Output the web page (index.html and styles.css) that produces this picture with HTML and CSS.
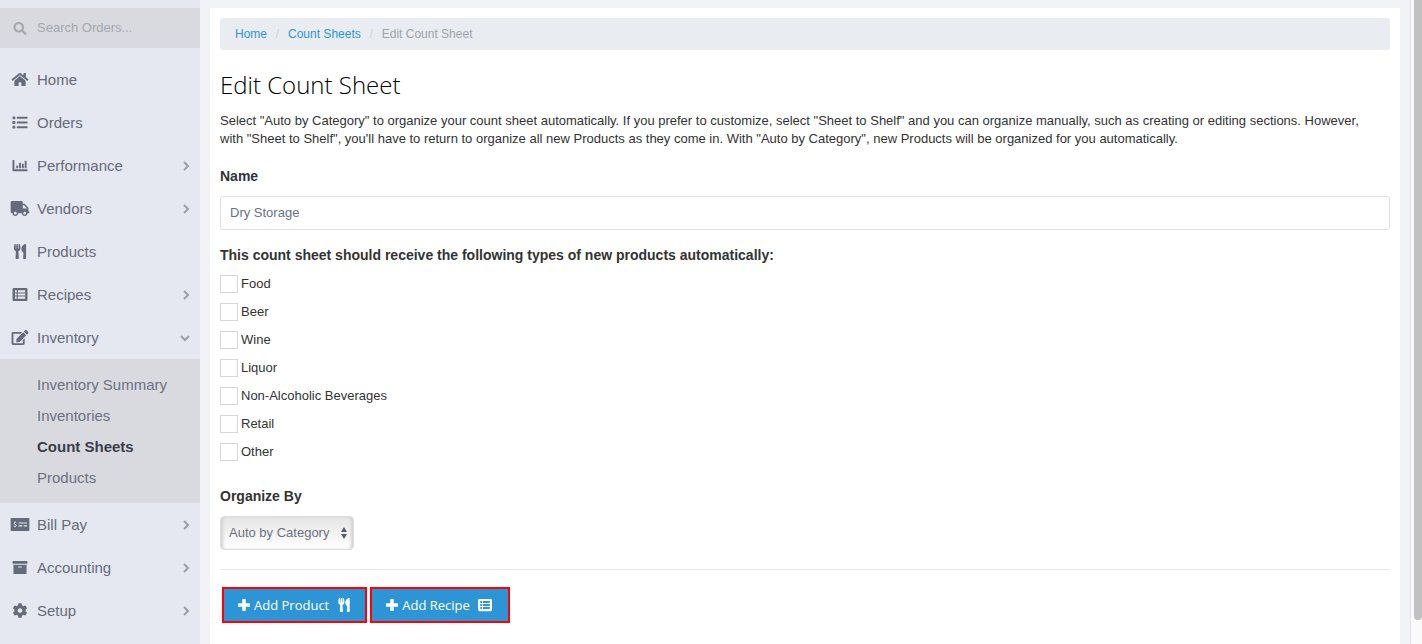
FILE: index.html
```html
<!DOCTYPE html>
<html lang="en">
<head>
<meta charset="utf-8">
<title>Edit Count Sheet</title>
<link rel="stylesheet" href="styles.css">
</head>
<body>
<svg class="sprite" aria-hidden="true">
  <symbol id="search" viewBox="0 0 512 512"><path d="M505 442.7L405.3 343c-4.5-4.5-10.6-7-17-7H372c27.6-35.3 44-79.7 44-128C416 93.1 322.9 0 208 0S0 93.1 0 208s93.1 208 208 208c48.3 0 92.7-16.4 128-44v16.3c0 6.4 2.5 12.5 7 17l99.7 99.7c9.4 9.4 24.6 9.4 33.9 0l28.3-28.3c9.4-9.4 9.4-24.6.1-34zM208 336c-70.7 0-128-57.2-128-128 0-70.7 57.2-128 128-128 70.7 0 128 57.2 128 128 0 70.7-57.2 128-128 128z"/></symbol>
  <symbol id="home" viewBox="0 0 576 512"><path d="M280.37 148.26L96 300.11V464a16 16 0 0 0 16 16l112.06-.29a16 16 0 0 0 15.92-16V368a16 16 0 0 1 16-16h64a16 16 0 0 1 16 16v95.64a16 16 0 0 0 16 16.05L464 480a16 16 0 0 0 16-16V300L295.67 148.26a12.19 12.19 0 0 0-15.3 0zM571.6 251.47L488 182.56V44.05a12 12 0 0 0-12-12h-56a12 12 0 0 0-12 12v72.61L318.47 43a48 48 0 0 0-61 0L4.34 251.47a12 12 0 0 0-1.6 16.9l25.5 31A12 12 0 0 0 45.15 301l235.22-193.74a12.19 12.19 0 0 1 15.3 0L530.9 301a12 12 0 0 0 16.9-1.6l25.5-31a12 12 0 0 0-1.7-16.93z"/></symbol>
  <symbol id="list" viewBox="0 0 512 512"><path d="M16 48h64a16 16 0 0 1 16 16v64a16 16 0 0 1-16 16H16a16 16 0 0 1-16-16V64a16 16 0 0 1 16-16zm0 160h64a16 16 0 0 1 16 16v64a16 16 0 0 1-16 16H16a16 16 0 0 1-16-16v-64a16 16 0 0 1 16-16zm0 160h64a16 16 0 0 1 16 16v64a16 16 0 0 1-16 16H16a16 16 0 0 1-16-16v-64a16 16 0 0 1 16-16zM160 60h340a12 12 0 0 1 12 12v48a12 12 0 0 1-12 12H160a12 12 0 0 1-12-12V72a12 12 0 0 1 12-12zm0 160h340a12 12 0 0 1 12 12v48a12 12 0 0 1-12 12H160a12 12 0 0 1-12-12v-48a12 12 0 0 1 12-12zm0 160h340a12 12 0 0 1 12 12v48a12 12 0 0 1-12 12H160a12 12 0 0 1-12-12v-48a12 12 0 0 1 12-12z"/></symbol>
  <symbol id="chart" viewBox="0 0 512 512"><path d="M16 64h32a16 16 0 0 1 16 16v304h432a16 16 0 0 1 16 16v32a16 16 0 0 1-16 16H32a32 32 0 0 1-32-32V80a16 16 0 0 1 16-16zM140 256h40a12 12 0 0 1 12 12v72a12 12 0 0 1-12 12h-40a12 12 0 0 1-12-12v-72a12 12 0 0 1 12-12zm96-96h40a12 12 0 0 1 12 12v168a12 12 0 0 1-12 12h-40a12 12 0 0 1-12-12V172a12 12 0 0 1 12-12zm96 32h40a12 12 0 0 1 12 12v136a12 12 0 0 1-12 12h-40a12 12 0 0 1-12-12V204a12 12 0 0 1 12-12zm96-96h40a12 12 0 0 1 12 12v232a12 12 0 0 1-12 12h-40a12 12 0 0 1-12-12V108a12 12 0 0 1 12-12z"/></symbol>
  <symbol id="truck" viewBox="0 0 640 512"><path d="M624 352h-16V243.9c0-12.7-5.1-24.9-14.1-33.9L494 110.1c-9-9-21.2-14.1-33.9-14.1H416V48c0-26.5-21.5-48-48-48H48C21.5 0 0 21.5 0 48v320c0 26.5 21.5 48 48 48h16c0 53 43 96 96 96s96-43 96-96h128c0 53 43 96 96 96s96-43 96-96h48c8.8 0 16-7.2 16-16v-32c0-8.8-7.2-16-16-16zM160 464c-26.5 0-48-21.5-48-48s21.5-48 48-48 48 21.5 48 48-21.5 48-48 48zm320 0c-26.5 0-48-21.5-48-48s21.5-48 48-48 48 21.5 48 48-21.5 48-48 48zm80-208H416V144h44.1l99.9 99.9V256z"/></symbol>
  <symbol id="utensils" viewBox="0 0 416 512"><path d="M207.9 15.2c.8 4.7 16.1 94.5 16.1 128.8 0 52.3-27.8 89.6-68.9 104.6L168 486.7c.7 13.7-10.2 25.3-24 25.3H80c-13.7 0-24.7-11.5-24-25.3l12.9-238.1C27.7 233.6 0 196.2 0 144 0 109.6 15.3 19.9 16.1 15.2 19.3-5.1 61.4-5.4 64 16.3v141.2c1.3 3.4 15.1 3.2 16 0 1.4-25.3 7.9-139.2 8-141.8 3.3-20.8 44.7-20.8 47.9 0 .2 2.7 6.6 116.5 8 141.8.9 3.2 14.8 3.4 16 0V16.3c2.6-21.6 44.8-21.4 48-1.1zm119.2 285.7l-15 185.1c-1.2 14 9.9 26 23.9 26h56c13.3 0 24-10.7 24-24V24c0-13.2-10.7-24-24-24-82.5 0-221.4 178.5-64.9 300.9z"/></symbol>
  <symbol id="recipes" viewBox="0 0 512 512"><path fill-rule="evenodd" d="M48 32h416a48 48 0 0 1 48 48v352a48 48 0 0 1-48 48H48a48 48 0 0 1-48-48V80a48 48 0 0 1 48-48zM84 112v72h60v-72zm0 108v72h60v-72zm0 108v72h60v-72zM180 112v72h252v-72zm0 108v72h252v-72zm0 108v72h252v-72z"/></symbol>
  <symbol id="edit" viewBox="0 0 576 512"><path d="M402.6 83.2l90.2 90.2c3.8 3.8 3.8 10 0 13.8L274.4 405.6l-92.8 10.3c-12.4 1.4-22.9-9.1-21.5-21.5l10.3-92.8L388.8 83.2c3.8-3.8 10-3.8 13.8 0zm162-22.9l-48.8-48.8c-15.2-15.2-39.9-15.2-55.2 0l-35.4 35.4c-3.8 3.8-3.8 10 0 13.8l90.2 90.2c3.8 3.8 10 3.8 13.8 0l35.4-35.4c15.2-15.3 15.2-40 0-55.2zM384 346.2V448H64V128h229.8c3.2 0 6.2-1.3 8.5-3.5l40-40c7.6-7.6 2.2-20.5-8.5-20.5H48C21.5 64 0 85.5 0 112v352c0 26.5 21.5 48 48 48h352c26.5 0 48-21.5 48-48V306.2c0-10.7-12.9-16-20.5-8.5l-40 40c-2.2 2.3-3.5 5.3-3.5 8.5z"/></symbol>
  <symbol id="check" viewBox="0 0 640 512"><path fill-rule="evenodd" d="M24 32h592a24 24 0 0 1 24 24v400a24 24 0 0 1-24 24H24a24 24 0 0 1-24-24V56a24 24 0 0 1 24-24zM272 184v36h288v-36zm0 100v36h128v-36zm176 0v36h112v-36z"/><path class="cut" d="M192 200c-12-12-28-16-42-14-40 4-40 52-4 64 40 12 60 28 40 54-16 20-56 18-78-4M150 150v36M150 312v40"/></symbol>
  <symbol id="archive" viewBox="0 0 512 512"><path d="M32 448c0 17.7 14.3 32 32 32h384c17.7 0 32-14.3 32-32V160H32v288zm160-212c0-6.6 5.4-12 12-12h104c6.6 0 12 5.4 12 12v8c0 6.6-5.4 12-12 12H204c-6.6 0-12-5.4-12-12v-8zM480 32H32C14.3 32 0 46.3 0 64v48c0 8.8 7.2 16 16 16h480c8.8 0 16-7.2 16-16V64c0-17.7-14.3-32-32-32z"/></symbol>
  <symbol id="cog" viewBox="0 0 512 512"><path d="M487.4 315.7l-42.6-24.6c4.3-23.2 4.3-47 0-70.2l42.6-24.6c4.9-2.8 7.1-8.6 5.5-14-11.1-35.6-30-67.8-54.7-94.6-3.8-4.1-10-5.1-14.8-2.3L380.8 110c-17.9-15.4-38.5-27.3-60.8-35.1V25.8c0-5.6-3.9-10.5-9.4-11.7-36.7-8.2-74.3-7.8-109.2 0-5.5 1.2-9.4 6.1-9.4 11.7V75c-22.2 7.9-42.8 19.8-60.8 35.1L88.7 85.5c-4.9-2.8-11-1.9-14.8 2.3-24.7 26.7-43.6 58.9-54.7 94.6-1.7 5.4.6 11.2 5.5 14L67.3 221c-4.3 23.2-4.3 47 0 70.2l-42.6 24.6c-4.9 2.8-7.1 8.6-5.5 14 11.1 35.6 30 67.8 54.7 94.6 3.8 4.1 10 5.1 14.8 2.3l42.6-24.6c17.9 15.4 38.5 27.3 60.8 35.1v49.2c0 5.6 3.9 10.5 9.4 11.7 36.7 8.2 74.3 7.8 109.2 0 5.5-1.2 9.4-6.1 9.4-11.7v-49.2c22.2-7.9 42.8-19.8 60.8-35.1l42.6 24.6c4.9 2.8 11 1.9 14.8-2.3 24.7-26.7 43.6-58.9 54.7-94.6 1.5-5.5-.7-11.3-5.6-14.1zM256 336c-44.1 0-80-35.9-80-80s35.9-80 80-80 80 35.9 80 80-35.9 80-80 80z"/></symbol>
  <symbol id="plus" viewBox="0 0 448 512"><path d="M424 190H290V56c0-14-10-24-24-24h-84c-14 0-24 10-24 24v134H24c-14 0-24 10-24 24v84c0 14 10 24 24 24h134v134c0 14 10 24 24 24h84c14 0 24-10 24-24V322h134c14 0 24-10 24-24v-84c0-14-10-24-24-24z"/></symbol>
  <symbol id="right" viewBox="0 0 10 10"><path class="line" d="M4 1L8 5L4 9"/></symbol>
  <symbol id="down" viewBox="0 0 10 10"><path class="line" d="M1 3L5 7L9 3"/></symbol>
</svg>

<div class="page">
  <aside class="sidebar">
    <label class="search">
      <svg class="icon"><use href="#search"/></svg>
      <input type="text" placeholder="Search Orders..." aria-label="Search Orders">
    </label>
    <nav class="nav">
      <a class="item" href="#"><svg class="icon"><use href="#home"/></svg><span>Home</span></a>
      <a class="item" href="#"><svg class="icon"><use href="#list"/></svg><span>Orders</span></a>
      <a class="item" href="#"><svg class="icon"><use href="#chart"/></svg><span>Performance</span><svg class="arrow"><use href="#right"/></svg></a>
      <a class="item" href="#"><svg class="icon"><use href="#truck"/></svg><span>Vendors</span><svg class="arrow"><use href="#right"/></svg></a>
      <a class="item" href="#"><svg class="icon"><use href="#utensils"/></svg><span>Products</span></a>
      <a class="item" href="#"><svg class="icon"><use href="#recipes"/></svg><span>Recipes</span><svg class="arrow"><use href="#right"/></svg></a>
      <a class="item" href="#"><svg class="icon"><use href="#edit"/></svg><span>Inventory</span><svg class="arrow"><use href="#down"/></svg></a>
      <div class="submenu">
        <a href="#">Inventory Summary</a>
        <a href="#">Inventories</a>
        <a class="current" href="#">Count Sheets</a>
        <a href="#">Products</a>
      </div>
      <a class="item" href="#"><svg class="icon"><use href="#check"/></svg><span>Bill Pay</span><svg class="arrow"><use href="#right"/></svg></a>
      <a class="item" href="#"><svg class="icon"><use href="#archive"/></svg><span>Accounting</span><svg class="arrow"><use href="#right"/></svg></a>
      <a class="item" href="#"><svg class="icon"><use href="#cog"/></svg><span>Setup</span><svg class="arrow"><use href="#right"/></svg></a>
    </nav>
  </aside>

  <main class="content">
    <nav class="breadcrumb">
      <a href="#">Home</a><span class="slash">/</span><a href="#">Count Sheets</a><span class="slash">/</span><span>Edit Count Sheet</span>
    </nav>
    <h1>Edit Count Sheet</h1>
    <p class="intro">Select "Auto by Category" to organize your count sheet automatically. If you prefer to customize, select "Sheet to Shelf" and you can organize manually, such as creating or editing sections. However, with "Sheet to Shelf", you'll have to return to organize all new Products as they come in. With "Auto by Category", new Products will be organized for you automatically.</p>
    <form>
      <label class="heading" for="name">Name</label>
      <input class="field" id="name" type="text" value="Dry Storage">
      <fieldset class="types">
        <legend class="heading">This count sheet should receive the following types of new products automatically:</legend>
        <label><input type="checkbox">Food</label>
        <label><input type="checkbox">Beer</label>
        <label><input type="checkbox">Wine</label>
        <label><input type="checkbox">Liquor</label>
        <label><input type="checkbox">Non-Alcoholic Beverages</label>
        <label><input type="checkbox">Retail</label>
        <label><input type="checkbox">Other</label>
      </fieldset>
      <label class="heading" for="organize">Organize By</label>
      <div class="select">
        <select id="organize"><option>Auto by Category</option><option>Sheet to Shelf</option></select>
        <svg class="updown" viewBox="0 0 6 12"><path d="M3 0L6 5H0zM3 12L0 7H6z"/></svg>
      </div>
      <div class="actions">
        <button type="button"><svg class="plus"><use href="#plus"/></svg>Add Product<svg class="kind"><use href="#utensils"/></svg></button>
        <button type="button"><svg class="plus"><use href="#plus"/></svg>Add Recipe<svg class="kind"><use href="#recipes"/></svg></button>
      </div>
    </form>
  </main>
  <div class="track"><div class="thumb"></div></div>
</div>
</body>
</html>
```
FILE: styles.css
```css
* { box-sizing: border-box; }

body {
  margin: 0;
  font: 13px/18px "Liberation Sans", Arial, sans-serif;
  color: #333;
  background: #f2f3f6;
}

a { text-decoration: none; }
svg { fill: currentColor; flex: none; }
input, select, button { font: inherit; color: inherit; margin: 0; }

.sprite { position: absolute; width: 0; height: 0; }
.line { fill: none; stroke: currentColor; stroke-width: 2; }
.cut { fill: none; stroke: #e5e8f0; stroke-width: 30; }

.page { display: flex; min-height: 100vh; }

/* Sidebar */
.sidebar {
  flex: 0 0 200px;
  min-width: 0;
  padding-top: 8px;
  background: #e5e8f0;
  color: #666b7c;
  font-size: 15px;
}
.search {
  display: flex;
  align-items: center;
  gap: 7px;
  height: 40px;
  padding: 0 10px;
  background: #d9dadf;
  color: #a3a7b1;
}
.search input {
  flex: 1;
  min-width: 0;
  padding: 0;
  border: 0;
  background: none;
  font-size: 13px;
}
.search input::placeholder { color: #a3a7b1; opacity: 1; }
.icon { width: 20px; height: 15px; }
.search .icon { height: 13px; }
.nav { padding-top: 10px; }
.item {
  display: flex;
  align-items: center;
  gap: 7px;
  height: 43px;
  padding: 0 10px;
  color: inherit;
}
.item span { flex: 1; }
.arrow { width: 10px; height: 10px; color: #9a9eaa; }
.submenu {
  display: flex;
  flex-direction: column;
  padding: 10px 10px 10px 37px;
  background: #d9dadf;
}
.submenu a { line-height: 31px; color: #6c7182; }
.submenu .current { font-weight: bold; color: #3a3e4b; }

/* Main panel */
.content {
  flex: 1;
  min-width: 0;
  margin: 8px 10px 0;
  padding: 10px;
  background: #fff;
}
.breadcrumb {
  display: flex;
  gap: 8px;
  padding: 7px 15px;
  border-radius: 3px;
  background: #e9ecf0;
  font-size: 12px;
  color: #a0a3ae;
}
.breadcrumb a { color: #2d95d6; }
.breadcrumb .slash { color: #cfd2d8; width: 5px; text-align: center; }
h1 {
  margin: 19px 0 11px;
  font: 300 24px/32px "Open Sans", sans-serif;
  color: #000;
}
.intro { margin: 0 0 18px; padding-right: 10px; }
.heading {
  display: block;
  padding: 0;
  font-size: 14px;
  line-height: 20px;
  font-weight: bold;
}
.field {
  display: block;
  width: 100%;
  height: 34px;
  margin: 10px 0 15px;
  padding: 0 9px 2px;
  border: 1px solid #e0e1e6;
  border-radius: 3px;
  background: #fff;
  color: #6c7182;
}
.types { margin: 0 0 20px; padding: 0; border: 0; }
.types legend { margin-bottom: 5px; }
.types label {
  display: flex;
  align-items: center;
  gap: 3px;
  height: 28px;
}
.types input {
  appearance: none;
  width: 18px;
  height: 18px;
  border: 1px solid #d7d7d9;
  background: #fff;
}
.select { position: relative; width: 134px; margin-top: 10px; }
.select select {
  appearance: none;
  display: block;
  width: 100%;
  height: 34px;
  padding: 0 8px;
  border: 1px solid #dcdee3;
  border-radius: 4px;
  background: linear-gradient(#e5e5e5, #fff);
  box-shadow: inset 3px 0 3px -1px #d2d2d2, inset -3px 0 3px -1px #d2d2d2;
  color: #6c7182;
}
.updown {
  position: absolute;
  right: 7px;
  top: 11px;
  width: 6px;
  height: 12px;
  color: #555a68;
}
.actions {
  display: flex;
  gap: 3px;
  margin-top: 19px;
  padding: 17px 2px 0;
  border-top: 1px solid #e8e8ea;
}
.actions button {
  display: flex;
  align-items: center;
  min-width: 140px;
  height: 36px;
  padding: 0 14px;
  border: 2px solid #f00;
  background: #2d95d6;
  color: #fff;
  font-family: "Open Sans", sans-serif;
}
.plus { width: 12px; height: 14px; margin-right: 4px; }
.kind { width: 14px; height: 14px; margin-left: 8px; }

/* Scrollbar */
.track {
  flex: 0 0 12px;
  padding-left: 3px;
  border-left: 1px solid #e3e4e7;
  background: #fafafa;
}
.thumb {
  height: 620px;
  border-radius: 0 0 4px 4px;
  background: #c1c1c1;
}
```
